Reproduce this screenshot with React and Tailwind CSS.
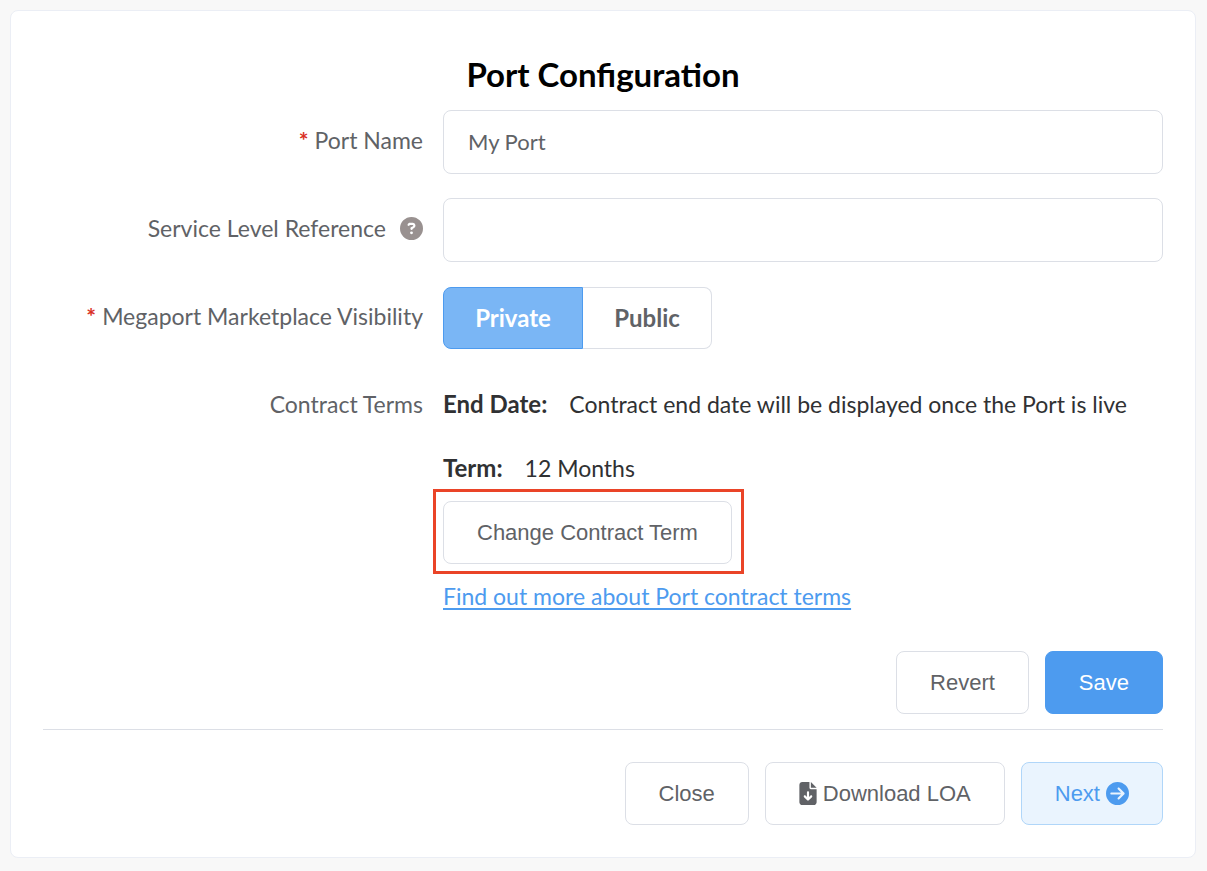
import { FaCircleArrowRight, FaCircleQuestion, FaFileArrowDown } from "react-icons/fa6";

const input =
  "block h-16 w-full rounded-lg border border-[#dcdfe6] bg-white px-6 pb-[2px] text-[22px] text-[#606266] outline-none";
const button =
  "flex h-[63px] items-center justify-center rounded-lg border px-[33px] font-['Liberation_Sans',Arial,sans-serif] text-[22px]";
const plain = "border-[#dcdfe6] bg-white text-[#606266]";

function Required() {
  return <span className="mr-[6px] font-bold text-[#d93025]">*</span>;
}

function Row({ label, children }) {
  return (
    <div className="grid grid-cols-[380px_1fr] gap-x-5">
      <div className="flex h-[60px] items-center justify-end whitespace-nowrap text-[#606266]">{label}</div>
      <div className="min-w-0">{children}</div>
    </div>
  );
}

export default function App() {
  return (
    <div className="min-h-screen bg-[#f8f8f8] pt-[10px] pr-[11px] pb-3 pl-[10px] font-['Lato',sans-serif] text-[23px] leading-8 text-[#303133]">
      <main className="rounded-lg border border-[#ebeef5] bg-white px-8 pt-[42px] pb-8">
        <h1 className="mb-[14px] text-center text-[33px] leading-[43px] font-bold text-black">Port Configuration</h1>

        <form onSubmit={(e) => e.preventDefault()}>
          <div className="flex flex-col gap-6">
            <Row label={<label htmlFor="port-name"><Required />Port Name</label>}>
              <input id="port-name" className={input} defaultValue="My Port" />
            </Row>
            <Row
              label={
                <>
                  <label htmlFor="service-level">Service Level Reference</label>
                  <button type="button" aria-label="Help" className="ml-[14px] text-[#999190]">
                    <FaCircleQuestion size={23} />
                  </button>
                </>
              }
            >
              <input id="service-level" className={input} />
            </Row>
            <Row label={<span id="visibility"><Required />Megaport Marketplace Visibility</span>}>
              <div role="group" aria-labelledby="visibility" className="flex h-16 items-center text-[24px] font-bold">
                <button
                  type="button"
                  aria-pressed="true"
                  className="h-[62px] w-[140px] rounded-l-lg border border-[#4d9bef] bg-[#7ab6f5] text-white"
                >
                  Private
                </button>
                <button
                  type="button"
                  aria-pressed="false"
                  className="h-[62px] w-[129px] rounded-r-lg border border-l-0 border-[#dcdfe6] bg-white text-[#606266]"
                >
                  Public
                </button>
              </div>
            </Row>
            <Row label="Contract Terms">
              <dl className="mb-[3px] flex flex-col gap-1">
                <div className="flex h-[60px] items-center gap-[22px]">
                  <dt className="text-[24px] font-bold">End Date:</dt>
                  <dd>Contract end date will be displayed once the Port is live</dd>
                </div>
                <div className="flex h-[60px] items-center gap-[22px]">
                  <dt className="text-[24px] font-bold">Term:</dt>
                  <dd>12 Months</dd>
                </div>
              </dl>
              <div className="relative w-fit">
                <button type="button" className={`${button} ${plain}`}>Change Contract Term</button>
                <span className="pointer-events-none absolute -top-3 -right-3 -bottom-[10px] -left-[10px] border-[3px] border-[#ea4428]" />
              </div>
              <a href="#terms" className="mt-4 inline-block text-[#4d9bef] underline decoration-2 underline-offset-3">
                Find out more about Port contract terms
              </a>
            </Row>
          </div>

          <div className="mt-[39px] flex justify-end gap-4">
            <button type="button" className={`${button} ${plain}`}>Revert</button>
            <button type="submit" className={`${button} border-[#4d9bef] bg-[#4d9bef] text-white`}>Save</button>
          </div>
        </form>

        <footer className="mt-[15px] flex justify-end gap-4 border-t border-[#dcdfe6] pt-8">
          <button type="button" className={`${button} ${plain}`}>Close</button>
          <button type="button" className={`${button} ${plain} gap-[6px]`}>
            <FaFileArrowDown size={23} className="w-[18px]" />
            Download LOA
          </button>
          <button type="button" className={`${button} gap-[6px] border-[#b0d6f9] bg-[#eaf4fe] text-[#4d9bef]`}>
            Next
            <FaCircleArrowRight size={23} />
          </button>
        </footer>
      </main>
    </div>
  );
}
